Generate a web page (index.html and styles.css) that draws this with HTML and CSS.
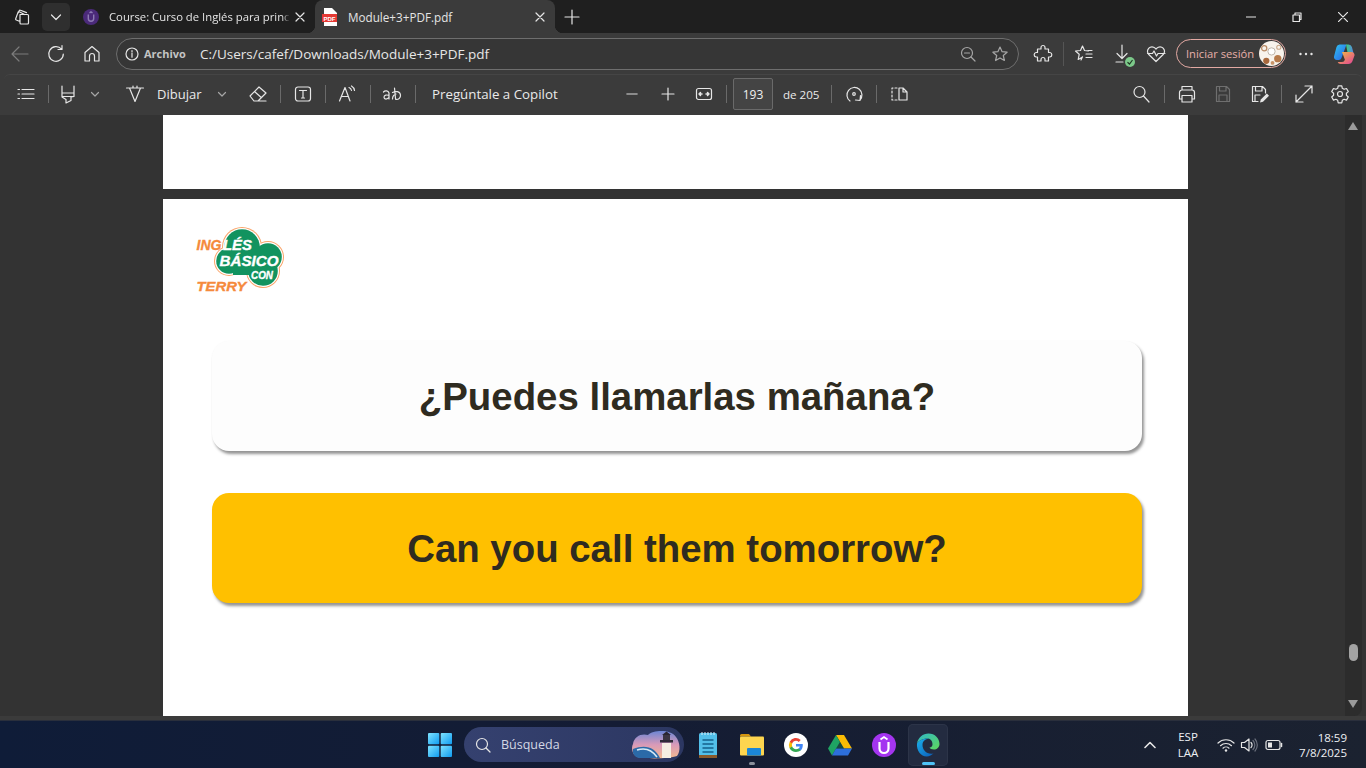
FILE: index.html
```html
<!DOCTYPE html>
<html lang="es">
<head>
<meta charset="utf-8">
<title>Module+3+PDF.pdf</title>
<link rel="stylesheet" href="styles.css">
</head>
<body>
<svg class="defs" width="0" height="0" aria-hidden="true">
  <defs>
    <linearGradient id="cp1" x1="0" y1="0" x2="1" y2="1"><stop offset="0" stop-color="#2fc4f0"/><stop offset="1" stop-color="#2b5fe8"/></linearGradient>
    <linearGradient id="cp2" x1="0" y1="0" x2="1" y2="1"><stop offset="0" stop-color="#f4c03c"/><stop offset="1" stop-color="#e0409a"/></linearGradient>
    <linearGradient id="cp3" x1="0" y1="0" x2="1" y2="0"><stop offset="0" stop-color="#3ad07a"/><stop offset="1" stop-color="#5a80f0"/></linearGradient>
    <linearGradient id="winl" x1="0" y1="0" x2="1" y2="1"><stop offset="0" stop-color="#7fe3ff"/><stop offset="1" stop-color="#0f9bf0"/></linearGradient>
    <linearGradient id="sky" x1="0" y1="0" x2="0" y2="1"><stop offset="0" stop-color="#6d86d4"/><stop offset=".5" stop-color="#d99ab8"/><stop offset="1" stop-color="#f3b98f"/></linearGradient>
    <linearGradient id="edge1" x1="0" y1="0" x2="1" y2="1"><stop offset="0" stop-color="#2fb8c8"/><stop offset="1" stop-color="#5fd85a"/></linearGradient>
    <linearGradient id="edge2" x1="0" y1="0" x2="1" y2="1"><stop offset="0" stop-color="#1bb0ea"/><stop offset="1" stop-color="#0b5cb8"/></linearGradient>
  </defs>
</svg>

<header class="tabstrip">
  <svg class="ic16 ml-14" viewBox="0 0 16 16"><path class="s" d="M6 5.500h7.500a1 1 0 0 1 1 1V14a1 1 0 0 1-1 1H7a1 1 0 0 1-1-1zM6 12.500 2.300 11a1 1 0 0 1-.6-1.300L4 3.400a1 1 0 0 1 1.300-.6l5.200 2.700M4.300 3.800 5.200 1.700a1 1 0 0 1 1.300-.5l6 2.400"/></svg>
  <div class="tabmenu ml-12"><svg class="ic12" viewBox="0 0 12 12"><path class="s" d="M1.500 4 6 8.500 10.500 4"/></svg></div>
  <div class="tab tab-off">
    <svg class="ic16" viewBox="0 0 16 16"><circle cx="8" cy="8" r="8" fill="#4b2a7a"/><path class="st-u" d="M5.300 5.500v4a2.700 2.700 0 0 0 5.400 0v-4M6.500 3.800 8 2.800l1.500 1"/></svg>
    <span class="tabtitle">Course: Curso de Inglés para princ</span>
    <svg class="ic10 tabx" viewBox="0 0 10 10"><path class="s" d="M1 1l8 8M9 1l-8 8"/></svg>
  </div>
  <div class="tab tab-on">
    <svg class="ic16 pdficon" viewBox="0 0 16 18"><path d="M2 0h8l5 5v13H2z" fill="#fff"/><rect y="6" width="15" height="8" fill="#e53935"/><text x="7.500" y="12.500" class="pdfword">PDF</text></svg>
    <span class="tabtitle">Module+3+PDF.pdf</span>
    <svg class="ic10 tabx" viewBox="0 0 10 10"><path class="s" d="M1 1l8 8M9 1l-8 8"/></svg>
  </div>
  <svg class="ic16 ml-9" viewBox="0 0 16 16"><path class="s" d="M8 1v14M1 8h14"/></svg>
  <div class="winctl">
    <span class="wbtn"><svg class="ic10" viewBox="0 0 10 10"><path class="s" d="M0 5h10"/></svg></span>
    <span class="wbtn"><svg class="ic10" viewBox="0 0 10 10"><path class="s" d="M1 3h6.500v6.500H1zM3 3V1h6v6.500H7.500"/></svg></span>
    <span class="wbtn"><svg class="ic10" viewBox="0 0 10 10"><path class="s" d="M0 0l10 10M10 0 0 10"/></svg></span>
  </div>
</header>

<nav class="addrbar">
  <svg class="ic20 ml-10 dim" viewBox="0 0 20 20"><path class="s" d="M18 10H2M9 3l-7 7 7 7"/></svg>
  <svg class="ic20 ml-16" viewBox="0 0 20 20"><path class="s" d="M15.500 5.200A7.300 7.300 0 1 0 17.300 10M16 1.500v4h-4"/></svg>
  <svg class="ic20 ml-16" viewBox="0 0 20 20"><path class="s" d="M3 8.500 10 2.500l7 6V17h-4.500v-5a2.500 2.500 0 0 0-5 0v5H3z"/></svg>
  <div class="urlbox ml-14">
    <svg class="ic14" viewBox="0 0 14 14"><circle class="s" cx="7" cy="7" r="6"/><path class="s" d="M7 6v4.200M7 3.500v1.200"/></svg>
    <span class="scheme">Archivo</span>
    <span class="url">C:/Users/cafef/Downloads/Module+3+PDF.pdf</span>
    <svg class="ic16 dim2" viewBox="0 0 16 16"><circle class="s" cx="7" cy="7" r="5.500"/><path class="s" d="M4.500 7h5M11 11l4 4"/></svg>
    <svg class="ic16 ml-16 dim2" viewBox="0 0 16 16"><path class="s" d="M8 1l2.100 4.700 5 .5-3.800 3.300 1.100 5L8 11.900l-4.400 2.600 1.100-5L.9 6.200l5-.5z"/></svg>
  </div>
  <svg class="ic20 ml-14" viewBox="0 0 20 20"><path class="s" d="M8 3.500a2 2 0 0 1 4 0V5h3.500v3.500H17a2.300 2.300 0 0 1 0 4.500h-1.500v4H12v-1.500a2 2 0 0 0-4 0V17H4.500v-4H3a2.300 2.300 0 0 1 0-4.500h1.500V5H8z"/></svg>
  <span class="vsep ml-10 tall"></span>
  <svg class="ic20 ml-10" viewBox="0 0 20 20"><path class="s" d="M8.500 2l2 4.500 3.800.4M7 16l1.500-3.200M8.500 2 6.500 6.500l-5 .5 3.700 3.300L4.200 15.500 8.500 13M12 10h6M12 13.500h6M14 6.500h4"/></svg>
  <div class="dlbox ml-18">
    <svg class="ic20" viewBox="0 0 20 20"><path class="s" d="M10 1v13M5 9.500l5 5 5-5M4 18h7"/></svg>
    <span class="dlok"><svg viewBox="0 0 10 10"><path class="st-ok" d="M2.500 5.200 4.500 7l3-4"/></svg></span>
  </div>
  <svg class="ic20 ml-14" viewBox="0 0 20 20"><path class="s" d="M10 17.500 2.800 10.500a4.400 4.400 0 0 1 0-6.300 4.400 4.400 0 0 1 6.300 0l.9.900.9-.9a4.400 4.400 0 0 1 6.300 0 4.400 4.400 0 0 1 0 6.300zM1.500 9.500h5l1.500-2.500 2.500 5 1.500-2.500h7"/></svg>
  <div class="signin ml-10">
    <span class="signtxt">Iniciar sesión</span>
    <svg class="avatar" viewBox="0 0 24 24"><circle cx="12" cy="12" r="12" fill="#f8f3ec"/><circle cx="5" cy="7" r="2.500" fill="none" stroke="#b98a64" stroke-width="1.200"/><circle cx="18" cy="17" r="3.500" fill="#b67a4a"/><circle cx="7" cy="19" r="3" fill="#a8683c"/><circle cx="13" cy="21" r="1.800" fill="#c89468"/><circle cx="19" cy="6" r="2" fill="none" stroke="#c9a688" stroke-width="1"/><circle cx="12" cy="10" r="3.500" fill="#fff" stroke="#b5aa9c" stroke-width=".8"/></svg>
  </div>
  <svg class="ic20 ml-10" viewBox="0 0 20 20"><circle class="f" cx="4.500" cy="10" r="1.200"/><circle class="f" cx="10" cy="10" r="1.200"/><circle class="f" cx="15.500" cy="10" r="1.200"/></svg>
  <svg class="ic22 ml-17" viewBox="0 0 22 22"><path d="M7 1.500h6.500L8.500 15a3 3 0 0 1-3 2H4a3 3 0 0 1-3-3.600L3.500 4A3.400 3.400 0 0 1 7 1.500z" fill="url(#cp1)"/><path d="M13 1.500h2.500a3.500 3.500 0 0 1 3.400 2.600L21 12h-6z" fill="url(#cp3)"/><path d="M9 9h9.500a3 3 0 0 1 2.900 3.800L19.500 18a4.500 4.500 0 0 1-4.300 3H7.500a3 3 0 0 1-2.800-2H9a3 3 0 0 0 2.900-2.200z" fill="url(#cp2)"/></svg>
</nav>

<div class="pdfbar">
  <svg class="ic20 ml-12" viewBox="0 0 20 20"><path class="s" d="M6 5.500h12M6 10h12M6 14.500h12"/><path class="s" d="M2 5.500h1.500M2 10h1.500M2 14.500h1.500"/></svg>
  <span class="vsep ml-12"></span>
  <svg class="ic20 ml-9" viewBox="0 0 20 20"><path class="s" d="M4 2v7h12V2M4 9v4l4 2.500V19l5-2.500v-3.500l3-.5V9M4 12.500h12"/></svg>
  <svg class="ic12 ml-11 dim2" viewBox="0 0 12 12"><path class="s" d="M2.500 4.500 6 8l3.500-3.500"/></svg>
  <svg class="ic20 ml-24" viewBox="0 0 20 20"><path class="s" d="M1.500 4h17M4.500 4 10 17.500 15.500 4M8 2v2M12 2v2"/></svg>
  <span class="lbl w-45 ml-12">Dibujar</span>
  <svg class="ic12 ml-14 dim2" viewBox="0 0 12 12"><path class="s" d="M2.500 4.500 6 8l3.500-3.500"/></svg>
  <svg class="ic20 ml-20" viewBox="0 0 20 20"><path class="s" d="M2 12 11 3l7 6-8 8H6zM6.500 7.500l7 6.200M6 17h12"/></svg>
  <span class="vsep ml-12"></span>
  <svg class="ic20 ml-12" viewBox="0 0 20 20"><rect class="s" x="2.500" y="3" width="15" height="14" rx="2.500"/><path class="s" d="M6.500 6.500h7M10 6.500v7.500M8.500 14h3"/></svg>
  <span class="vsep ml-12"></span>
  <svg class="ic20 ml-11" viewBox="0 0 20 20"><path class="s" d="M2.500 17 8 3.500 13 17M4.500 12.500h7M12 3.500a4 4 0 0 1 2.500 3M14.500 2a6 6 0 0 1 3 4.500"/></svg>
  <span class="vsep ml-13"></span>
  <svg class="ic20 ml-11" viewBox="0 0 20 20"><path class="s" d="M1.500 8a3.200 3.200 0 0 1 5.500 1v6M7 11.500C5 10.500 2 11 2 13.300s3.500 2.400 5 0M12.500 4l1 10.500c0 1 .7 1.200 1.200.8M10.500 8.500c3-1.500 7.500-1.500 8 2.500 .3 3-2 4.500-4 4.500M10.500 15c0-3 2-5 3.500-5"/></svg>
  <span class="vsep ml-13"></span>
  <span class="lbl wide w-126 ml-16">Pregúntale a Copilot</span>
  <svg class="ic20 ml-64" viewBox="0 0 20 20"><path class="s dimline" d="M5 10h10"/></svg>
  <svg class="ic20 ml-16" viewBox="0 0 20 20"><path class="s" d="M4 10h12M10 4v12"/></svg>
  <svg class="ic20 ml-16" viewBox="0 0 20 20"><rect class="s" x="2.500" y="4.500" width="15" height="11" rx="2"/><path class="s sw2" d="M5 10h3M6.500 8.500 5 10l1.500 1.500M15 10h-3M13.500 8.500 15 10l-1.500 1.500"/></svg>
  <span class="vsep ml-12"></span>
  <div class="pagebox ml-6">193</div>
  <span class="lbl small w-36 ml-10">de 205</span>
  <span class="vsep ml-12"></span>
  <svg class="ic20 ml-12" viewBox="0 0 20 20"><path class="s" d="M6 17A7.500 7.500 0 1 1 16 16M16.500 11.500 16 16.500l-4.500-.5"/><circle class="s" cx="10" cy="10" r="1.300"/></svg>
  <span class="vsep ml-12"></span>
  <svg class="ic20 ml-12" viewBox="0 0 20 20"><path class="s dash" d="M8 4H3v12h5"/><path class="s" d="M10 4h4l4 4v8h-8zM14 4v4h4"/></svg>
  <svg class="ic20 search-ml" viewBox="0 0 20 20"><circle class="s" cx="8.500" cy="8" r="5.500"/><path class="s" d="M12.500 12l5.500 6"/></svg>
  <span class="vsep ml-13"></span>
  <svg class="ic20 ml-12" viewBox="0 0 20 20"><path class="s" d="M5 6V2.500h10V6M5 15H2.500V8.500A2.500 2.500 0 0 1 5 6h10a2.500 2.500 0 0 1 2.500 2.500V15H15M5 11.500h10V18H5z"/></svg>
  <svg class="ic20 ml-16 faded" viewBox="0 0 20 20"><path class="s" d="M3.500 2.500h10l3 3v12h-13zM6.500 2.500v4.500h6.500v-4.500M6 17.500v-6.500h8v6.500"/></svg>
  <svg class="ic20 ml-16" viewBox="0 0 20 20"><path class="s" d="M9 17.500H3.500v-15h10l3 3V9M6.500 2.500v4.500h6.500v-4.500M6 17.500v-6.500h5"/><path class="f" d="M11 18.500l.8-3 6-6 2.200 2.200-6 6z"/></svg>
  <span class="vsep ml-12"></span>
  <svg class="ic20 ml-12" viewBox="0 0 20 20"><path class="s" d="M2 18 18 2M11 2h7v7M2 11v7h7"/></svg>
  <svg class="ic20 ml-16" viewBox="0 0 20 20"><path class="s" d="M8.200 1.800h3.600l.5 2.500 1.800 1 2.400-.8 1.800 3.100-1.900 1.700v2l1.900 1.700-1.800 3.100-2.400-.8-1.800 1-.5 2.500H8.200l-.5-2.500-1.800-1-2.400.8-1.800-3.100 1.900-1.700v-2L1.700 7.600l1.800-3.100 2.400.8 1.800-1z"/><circle class="s" cx="10" cy="10" r="2.500"/></svg>
</div>

<main class="viewer">
  <div class="pages">
    <section class="page page-prev"></section>
    <section class="page page-cur">
      <svg class="logo" viewBox="0 0 90 68" role="img" aria-label="Inglés básico con Terry">
        <g class="lobes lobe-o"><circle cx="47" cy="20" r="20"/><circle cx="73" cy="30" r="16"/><circle cx="68" cy="44" r="17"/><circle cx="34" cy="34" r="15"/></g>
        <g class="lobes lobe-w"><circle cx="47" cy="20" r="19"/><circle cx="73" cy="30" r="15"/><circle cx="68" cy="44" r="16"/><circle cx="34" cy="34" r="14"/></g>
        <g class="lobes lobe-g"><circle cx="47" cy="20" r="17.800"/><circle cx="73" cy="30" r="13.800"/><circle cx="68" cy="44" r="14.800"/><circle cx="34" cy="34" r="12.800"/><rect x="38" y="20" width="32" height="28"/></g>
        <text x="1.500" y="23" class="lg lg-o" textLength="25" lengthAdjust="spacingAndGlyphs">ING</text>
        <text x="28" y="23" class="lg lg-w" textLength="29" lengthAdjust="spacingAndGlyphs">LÉS</text>
        <text x="24.500" y="38.500" class="lg lg-w lg-b" textLength="59" lengthAdjust="spacingAndGlyphs">BÁSICO</text>
        <text x="56" y="52" class="lg lg-w lg-c" textLength="22" lengthAdjust="spacingAndGlyphs">CON</text>
        <text x="1.500" y="64" class="lg lg-o lg-t" textLength="50" lengthAdjust="spacingAndGlyphs">TERRY</text>
      </svg>
      <div class="card card-white">¿Puedes llamarlas mañana?</div>
      <div class="card card-gold">Can you call them tomorrow?</div>
    </section>
  </div>
  <aside class="scrollbar">
    <span class="arrow up"></span>
    <span class="thumb"></span>
    <span class="arrow down"></span>
  </aside>
</main>

<footer class="taskbar">
  <svg class="winlogo" viewBox="0 0 24 24"><rect x="0" y="0" width="11.300" height="11.300" rx="1" fill="url(#winl)"/><rect x="12.700" y="0" width="11.300" height="11.300" rx="1" fill="url(#winl)"/><rect x="0" y="12.700" width="11.300" height="11.300" rx="1" fill="url(#winl)"/><rect x="12.700" y="12.700" width="11.300" height="11.300" rx="1" fill="url(#winl)"/></svg>
  <div class="searchpill">
    <svg class="ic16 srch" viewBox="0 0 16 16"><circle class="s" cx="7" cy="7" r="5.500"/><path class="s" d="M11 11l4 4"/></svg>
    <span class="srchtxt">Búsqueda</span>
    <svg class="srchart" viewBox="0 0 50 30"><path d="M2 15C3 7 11 4 17 6 22 1 40 0 45 8c4 5 5 14 1 19-8 3-32 3-40 1C1 25 0 19 2 15z" fill="url(#sky)"/><path d="M2 20c12-5 22-2 27 9H8C4 28 1 25 2 20z" fill="#2b6aa8"/><path d="M6 21c9-3 15 0 20 7" stroke="#d8ecf7" stroke-width="1.500" fill="none"/><rect x="31" y="14" width="9" height="15" fill="#f4eee2"/><rect x="29" y="11" width="13" height="2.500" fill="#2e2a38"/><rect x="32" y="6" width="7" height="5" fill="#3b3542"/><path d="M31 6l4.500-3.500L40 6z" fill="#2a2630"/></svg>
  </div>
  <div class="apps">
    <span class="app"><svg class="ic24 tall24" viewBox="0 0 24 28"><rect x="3" y="2" width="18" height="25" rx="1.500" fill="#52bfe9"/><rect x="3" y="24" width="18" height="3" fill="#8a5a2b"/><path d="M6.500 9h11M6.500 13h11M6.500 17h11M6.500 21h11" stroke="#15618c" stroke-width="1.600"/><path d="M6 1v3M9 1v3M12 1v3M15 1v3M18 1v3" stroke="#d5f0fb" stroke-width="1"/></svg></span>
    <span class="app dot"><svg class="ic24" viewBox="0 0 24 24"><path d="M0 2.500A1.500 1.500 0 0 1 1.500 1H9l2 2.500H0z" fill="#d4950f"/><rect y="3.500" width="24" height="19" rx="1" fill="#fdd54f"/><rect x="7" y="15" width="14" height="7.500" rx="1" fill="#1b86d6"/></svg></span>
    <span class="app"><svg class="ic24" viewBox="0 0 24 24"><circle cx="12" cy="12" r="12" fill="#fff"/><path d="M18.800 12.300c0-.5 0-1-.1-1.400H12v2.700h3.800a3.300 3.300 0 0 1-1.400 2.100v1.800h2.300c1.300-1.200 2.100-3 2.100-5.200z" fill="#4285f4"/><path d="M12 19c1.900 0 3.500-.6 4.700-1.700l-2.300-1.800c-.6.400-1.400.7-2.400.7-1.800 0-3.400-1.200-3.900-2.900H5.700v1.900A7 7 0 0 0 12 19z" fill="#34a853"/><path d="M8.100 13.300a4.200 4.200 0 0 1 0-2.700V8.700H5.700a7 7 0 0 0 0 6.500z" fill="#fbbc05"/><path d="M12 7.800c1 0 2 .4 2.700 1.100l2-2A7 7 0 0 0 5.700 8.700l2.400 1.900c.5-1.700 2.100-2.800 3.900-2.800z" fill="#ea4335"/></svg></span>
    <span class="app"><svg class="ic24" viewBox="0 0 24 22"><path d="M8 1h8l8 13.500h-8z" fill="#fbbc04"/><path d="M8 1 0 14.500 4 21.500 12 8z" fill="#1fa463"/><path d="M4 21.500h16l4-7H8z" fill="#2d6fdb"/><path d="M8 14.500h8L12 8z" fill="#1a8f55" opacity=".4"/></svg></span>
    <span class="app"><svg class="ic24" viewBox="0 0 24 24"><circle cx="12" cy="12" r="12" fill="#a435f0"/><path d="M7.500 9v6.500a4.500 4.500 0 0 0 9 0V9" fill="none" stroke="#fff" stroke-width="2.200"/><path d="M8.500 6.500 12 4l3.500 2.500" fill="none" stroke="#fff" stroke-width="1.800"/></svg></span>
    <span class="app app-on"><svg class="ic24" viewBox="0 0 24 24"><path d="M1 10.500C2 4.500 7 .5 12.500.5c6.500 0 11 5 11 10.500 0 3.500-2.800 5.500-5.500 5.500-2.500 0-4-1-4.500-2 2-.3 3-1.500 3-3.300C16.500 7 13.500 5 10 5.500 5.500 6 2.500 8 1 10.500z" fill="url(#edge1)"/><path d="M1 10.500C2.500 8 5.500 6 10 5.500c1 0 2 0 3 .5-3.500-.5-6.500 2-6.500 6 0 5 4.500 10 11 8.500-1.800 1.500-4 3-6.800 3C5 23.500.3 17.500 1 10.500z" fill="url(#edge2)"/></svg></span>
  </div>
  <div class="tray">
    <svg class="ic12" viewBox="0 0 12 12"><path class="s st-w" d="M1 8.500 6 3.500l5 5"/></svg>
    <div class="lang"><span>ESP</span><span>LAA</span></div>
    <svg class="ic18" viewBox="0 0 18 18"><path class="s" d="M1 7a11.500 11.500 0 0 1 16 0M3.500 9.700a8 8 0 0 1 11 0M6 12.200a4.300 4.300 0 0 1 6 0"/><circle class="f" cx="9" cy="14.500" r="1.200"/></svg>
    <svg class="ic18" viewBox="0 0 18 18"><path class="s" d="M1.500 6.500h3L9 3v12L4.500 11.500h-3zM11 6.500a3.500 3.500 0 0 1 0 5"/><path class="s vol" d="M13 4.500a6.500 6.500 0 0 1 0 9M15 3a9 9 0 0 1 0 12"/></svg>
    <svg class="ic18" viewBox="0 0 18 18"><rect class="s" x="1" y="4.500" width="14" height="9" rx="2"/><rect class="f" x="3" y="6.500" width="4" height="5"/><path class="s sw2" d="M16.500 7.500v3"/></svg>
    <div class="clock"><span>18:59</span><span>7/8/2025</span></div>
  </div>
</footer>
</body>
</html>
```

FILE: styles.css
```css
* { box-sizing: border-box; }
html, body { margin: 0; height: 100%; }
body {
  width: 1366px; height: 768px; overflow: hidden;
  display: flex; flex-direction: column;
  background: #3b3b3b; color: #e8e8e8;
  font-family: "Open Sans", "Noto Sans", sans-serif; font-size: 12px;
}
.defs { position: absolute; }
svg { display: block; flex: none; }
.s { fill: none; stroke: #e6e6e6; stroke-width: 1.2; stroke-linejoin: round; stroke-linecap: round; }
.f { fill: #e6e6e6; }
.sw2 { stroke-width: 1.5; }
.dash { stroke-dasharray: 2 2; }
.dimline { stroke: #a6a6a6; stroke-width: 1.6; }
.ic10 { width: 10px; height: 10px; }
.ic12 { width: 12px; height: 12px; }
.ic14 { width: 14px; height: 14px; }
.ic16 { width: 16px; height: 16px; }
.ic18 { width: 18px; height: 18px; }
.ic20 { width: 20px; height: 20px; }
.ic22 { width: 22px; height: 22px; }
.ic24 { width: 24px; height: 24px; }
.tall24 { height: 28px; }
.dim .s { stroke: #7c7c7c; }
.dim2 .s { stroke: #a6a6a6; }
.faded .s { stroke: #6f6f6f; }
.ml-6 { margin-left: 6px; } .ml-9 { margin-left: 9px; } .ml-10 { margin-left: 10px; }
.ml-11 { margin-left: 11px; } .ml-12 { margin-left: 12px; } .ml-13 { margin-left: 13px; }
.ml-14 { margin-left: 14px; } .ml-16 { margin-left: 16px; } .ml-17 { margin-left: 17px; }
.ml-18 { margin-left: 18px; } .ml-20 { margin-left: 20px; } .ml-24 { margin-left: 24px; }
.ml-64 { margin-left: 64px; }
.search-ml { margin-left: 222px; }

/* Tab strip */
.tabstrip { height: 33px; flex: none; display: flex; align-items: center; background: #1f1f1f; }
.tabmenu { width: 28px; height: 28px; border-radius: 5px; background: #2f2f2f; display: flex; align-items: center; justify-content: center; }
.tab { height: 33px; display: flex; align-items: center; position: relative; }
.tab-off { width: 243px; margin-left: 2px; padding-left: 11px; }
.tab-on { width: 240px; padding-left: 7px; background: #3b3b3b; border-radius: 8px 8px 0 0; }
.tab-on::before, .tab-on::after { content: ""; position: absolute; bottom: 0; width: 8px; height: 8px; }
.tab-on::before { left: -8px; background: radial-gradient(circle at 0 0, transparent 8px, #3b3b3b 8.5px); }
.tab-on::after { right: -8px; background: radial-gradient(circle at 100% 0, transparent 8px, #3b3b3b 8.5px); }
.st-u { fill: none; stroke: #8d7bb3; stroke-width: 1.4; }
.pdficon { height: 18px; }
.pdfword { font: bold 6px "Liberation Sans", sans-serif; fill: #fff; text-anchor: middle; }
.tabtitle { flex: 1; min-width: 0; margin-left: 10px; white-space: nowrap; overflow: hidden; font-size: 11.7px; color: #e4e4e4; }
.tab-off .tabtitle { font-size: 11.3px;
  -webkit-mask-image: linear-gradient(to left, transparent, #000 8px); mask-image: linear-gradient(to left, transparent, #000 8px); }
.tabx { margin: 0 10px 0 9px; }
.tab-off .tabx { margin-left: 5px; }
.winctl { margin-left: auto; display: flex; }
.wbtn { width: 46px; height: 33px; display: flex; align-items: center; justify-content: center; }

/* Address bar */
.addrbar { height: 41px; flex: none; display: flex; align-items: center; background: #3b3b3b; }
.urlbox { width: 903px; height: 32px; border: 1px solid #6e6e6e; border-radius: 16px; display: flex; align-items: center; padding: 0 10px 0 8px; background: #363636; }
.scheme { margin-left: 5px; width: 42px; font-size: 11px; font-weight: 700; color: #c4c4c4; white-space: nowrap; }
.url { margin-left: 14px; flex: 1; font-size: 13.5px; color: #e6e6e6; white-space: nowrap; }
.vsep { width: 1px; height: 18px; flex: none; background: #6a6a6a; }
.tall { height: 24px; background: #555; }
.dlbox { position: relative; width: 20px; height: 20px; }
.dlok { position: absolute; right: -3px; bottom: -3px; width: 10px; height: 10px; border-radius: 50%; background: #7cc98a; }
.st-ok { fill: none; stroke: #1f3a24; stroke-width: 1.2; }
.signin { width: 110px; height: 29px; border: 1px solid #e3a9a3; border-radius: 15px; display: flex; align-items: center; padding: 0 1px 0 9px; justify-content: space-between; }
.signtxt { font-size: 11.2px; color: #e8b0aa; white-space: nowrap; }
.avatar { width: 25px; height: 25px; }

/* PDF toolbar */
.pdfbar { height: 41px; flex: none; margin-left: 4px; width: 1358px; display: flex; align-items: center; padding-bottom: 2px; background: #3b3b3b; border-top: 1px solid #454545; border-radius: 6px 6px 0 0; }
.lbl { font-size: 13px; color: #eaeaea; white-space: nowrap; }
.wide { font-size: 13.3px; }
.small { font-size: 11.6px; }
.w-36 { width: 36px; } .w-45 { width: 45px; } .w-126 { width: 126px; }
.pagebox { width: 40px; height: 32px; flex: none; border: 1px solid #6a6a6a; border-radius: 2px; background: #444; display: flex; align-items: center; justify-content: center; font-size: 12px; color: #f0f0f0; }

/* Viewer */
.viewer { height: 601px; flex: none; display: flex; background: #333; overflow: hidden; position: relative; }
.pages { flex: 1; display: flex; flex-direction: column; align-items: center; gap: 10px; padding-right: 15px; min-width: 0; }
.page { width: 1025px; background: #fff; flex: none; }
.page-prev { height: 74px; }
.page-cur { flex: 1; padding: 28px 46px 0 49px; display: flex; flex-direction: column; align-items: stretch; font-family: "Liberation Sans", Arial, sans-serif; }
.logo { width: 90px; height: 68px; margin-left: -17px; }
.lobe-o { fill: #f9a469; }
.lobe-w { fill: #fff; }
.lobe-g { fill: #12935f; }
.lg { font: italic 700 15.5px "Liberation Sans", Arial, sans-serif; stroke-width: .35; }
.lg-o { fill: #f58a3c; stroke: #f58a3c; }
.lg-w { fill: #fff; stroke: #fff; }
.lg-b { font-size: 15px; }
.lg-c { font-size: 10.5px; }
.lg-t { font-size: 13.5px; }
.card { height: 110px; padding-top: 2px; border-radius: 17px; display: flex; align-items: center; justify-content: center; font-weight: 700; font-size: 38.4px; color: #2f2b20; box-shadow: 2px 3px 3px rgba(0,0,0,.42); }
.card-white { margin-top: 46px; background: #fdfdfd; box-shadow: 2px 3px 3px rgba(0,0,0,.42), 0 0 2px rgba(0,0,0,.03); }
.card-gold { margin-top: 42px; background: #ffc000; }
.scrollbar { position: absolute; right: 4px; top: 0; bottom: 0; width: 17px; background: #2c2c2c; border-radius: 0 0 8px 0; }
.thumb { position: absolute; left: 4px; top: 529px; width: 9px; height: 17px; border-radius: 5px; background: #a3a3a3; }
.arrow { position: absolute; left: 3px; width: 0; height: 0; border-left: 5.5px solid transparent; border-right: 5.5px solid transparent; }
.up { top: 7px; border-bottom: 8px solid #9a9a9a; }
.down { bottom: 8px; border-top: 8px solid #9a9a9a; }

/* Taskbar */
.taskbar { height: 48px; flex: none; margin-top: 4px; display: flex; align-items: center; padding-left: 428px; background: linear-gradient(90deg, #0f1c38 0%, #141c34 45%, #1b2230 100%); border-top: 1px solid #2a2f3c; font-family: "Open Sans", "Noto Sans", sans-serif; }
.winlogo { width: 24px; height: 24px; }
.searchpill { width: 220px; height: 35px; margin-left: 12px; border-radius: 18px; background: linear-gradient(90deg, #35416f, #2c3762); display: flex; align-items: center; padding-left: 11px; position: relative; }
.srchtxt { margin-left: 10px; font-size: 12.5px; color: #d4d8e4; }
.srchart { position: absolute; right: 3px; top: 2px; width: 50px; height: 30px; }
.apps { display: flex; gap: 4px; margin-left: 4px; }
.app { width: 40px; height: 42px; display: flex; align-items: center; justify-content: center; border-radius: 5px; position: relative; }
.app-on { background: #232b40; box-shadow: inset 0 0 0 1px #2c3448; }
.app-on::after { content: ""; position: absolute; bottom: 1px; left: 14px; width: 13px; height: 3px; border-radius: 2px; background: #4fc3f7; }
.dot::after { content: ""; position: absolute; bottom: 1px; left: 17px; width: 6px; height: 3px; border-radius: 2px; background: #8b909c; }
.tray { margin-left: auto; display: flex; align-items: center; padding-right: 19px; color: #eef0f4; font-size: 11.5px; }
.st-w { stroke-width: 1.6; }
.vol { stroke: #6a6f7c; }
.lang { width: 36px; margin: 0 11px 0 14px; display: flex; flex-direction: column; align-items: center; gap: 1px; line-height: 15px; }
.lang + svg + svg { margin-left: 5px; }
.lang + svg + svg + svg { margin-left: 7px; }
.clock { width: 59px; margin-left: 5px; display: flex; flex-direction: column; align-items: flex-end; line-height: 15px; }
```
